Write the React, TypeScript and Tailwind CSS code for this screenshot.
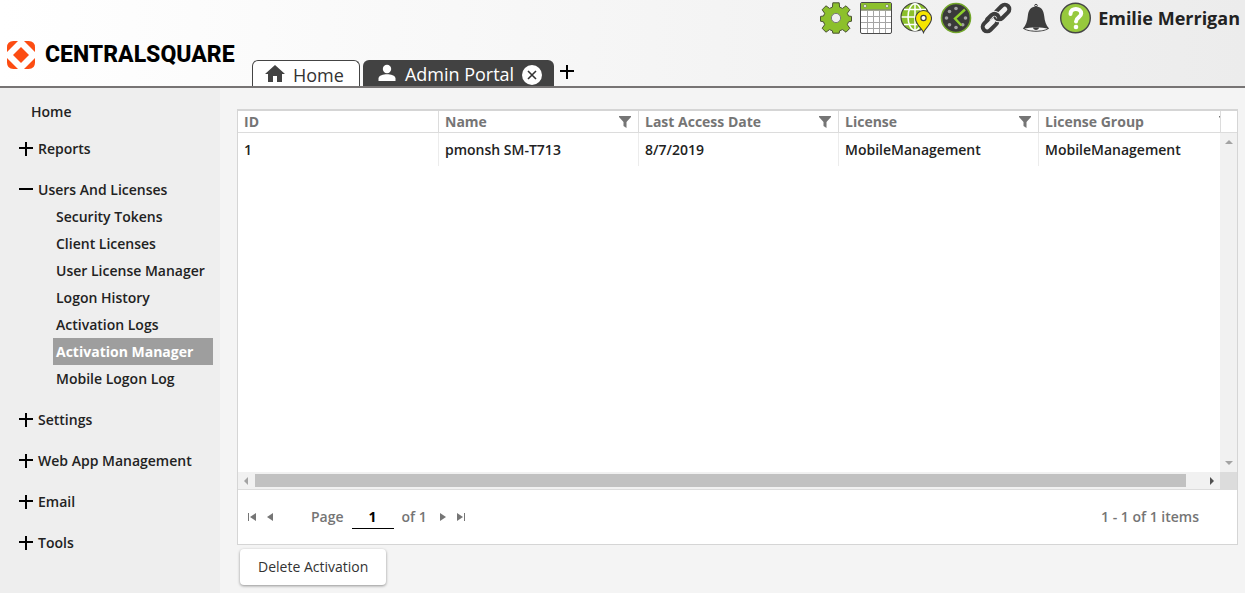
import React, { useState } from 'react';

interface MenuSection {
  label: string;
  items?: string[];
}

interface Activation {
  id: number;
  name: string;
  lastAccess: string;
  license: string;
  licenseGroup: string;
}

const sections: MenuSection[] = [
  { label: 'Reports' },
  {
    label: 'Users And Licenses',
    items: [
      'Security Tokens',
      'Client Licenses',
      'User License Manager',
      'Logon History',
      'Activation Logs',
      'Activation Manager',
      'Mobile Logon Log'
    ]
  },
  { label: 'Settings' },
  { label: 'Web App Management' },
  { label: 'Email' },
  { label: 'Tools' }
];

const activations: Activation[] = [
  { id: 1, name: 'pmonsh SM-T713', lastAccess: '8/7/2019', license: 'MobileManagement', licenseGroup: 'MobileManagement' }
];

const columns = ['ID', 'Name', 'Last Access Date', 'License', 'License Group'];

const GearIcon = () => (
  <svg className="size-8" viewBox="0 0 32 32" aria-hidden="true">
    <g fill="#8cc02c" stroke="#4a5233" strokeWidth="1">
      <path d="M12.8 0.8h6.4l.4 4.4 2.9 1.2 3.5-2.6 3.9 3.9-2.6 3.6 1.2 2.7 3 .4v4.8l-3 .6-1.2 2.9 2.6 3.6-3.9 3.9-3.5-2.6-2.9 1.2-.4 2.4h-6.4l-.4-2.4-2.9-1.2-3.5 2.6-3.9-3.9 2.6-3.6-1.2-2.9-3-.6v-4.8l3-.4 1.2-2.7-2.6-3.6 3.9-3.9 3.5 2.6 2.9-1.2z" />
      <circle cx="16" cy="16" r="4.6" fill="#efefef" stroke="#7a7a7a" />
    </g>
  </svg>
);

const CalendarIcon = () => (
  <svg className="size-8" viewBox="0 0 32 32" aria-hidden="true">
    <rect x="0.5" y="0.5" width="31" height="31" rx="1.5" fill="#fff" stroke="#4a4a4a" />
    <path d="M1 1h30v6.5H1z" fill="#8cc02c" />
    <path d="M1 8h30" stroke="#4a5233" />
    <path d="M7.5 9v22M13.5 9v22M19.5 9v22M25.5 9v22M1 14.5h30M1 20.5h30M1 26.5h30" stroke="#a5a5a5" />
    <circle cx="5" cy="4" r="1.5" fill="#fff" stroke="#4a5233" strokeWidth="0.5" />
    <circle cx="27" cy="4" r="1.5" fill="#fff" stroke="#4a5233" strokeWidth="0.5" />
  </svg>
);

const GlobeIcon = () => (
  <svg className="size-8" viewBox="0 0 32 32" aria-hidden="true">
    <circle cx="15" cy="15" r="14" fill="#8cc02c" stroke="#3f3f3f" strokeWidth="1.2" />
    <g fill="none" stroke="#fff" strokeWidth="1.5">
      <ellipse cx="15" cy="15" rx="7" ry="13.3" />
      <path d="M15 1.7v26.6M1.7 15h26.6M4 7.5h22M4 22.5h22" />
    </g>
    <path d="M23.5 30.5c-1.5-4.5-8-8-8-14a8 8 0 0 1 16 0c0 6-6.5 9.500-8 14z" fill="#f6e500" stroke="#3f3f3f" strokeWidth="1.1" />
    <circle cx="23.5" cy="16" r="2.6" fill="#fff" stroke="#3f3f3f" strokeWidth="1.2" />
  </svg>
);

const ClockIcon = () => (
  <svg className="size-8" viewBox="0 0 32 32" aria-hidden="true">
    <circle cx="16" cy="16" r="14.5" fill="#3a3a3a" stroke="#72a62a" strokeWidth="1.6" />
    <g fill="#a3a3a3">
      <circle cx="16" cy="6.5" r="1.8" />
      <circle cx="9.5" cy="9.5" r="1.8" />
      <circle cx="6.5" cy="16" r="1.8" />
      <circle cx="9.5" cy="22.7" r="1.8" />
      <circle cx="16" cy="25.5" r="1.8" />
      <circle cx="22.7" cy="22.7" r="1.8" />
      <circle cx="25.5" cy="16" r="1.8" />
    </g>
    <path d="M25 7.5L15 16.5L21.5 23.5" fill="none" stroke="#8fd02c" strokeWidth="2.4" />
  </svg>
);

const LinkIcon = () => (
  <svg className="size-8" viewBox="0 0 32 32" aria-hidden="true">
    <g fill="none" strokeLinecap="round">
      <rect x="-8.5" y="-4.5" width="17" height="9" rx="4.5" transform="translate(10 22) rotate(-45)" stroke="#3d3d3d" strokeWidth="4" />
      <rect x="-8.5" y="-4.5" width="17" height="9" rx="4.5" transform="translate(22 10) rotate(-45)" stroke="#efefef" strokeWidth="6" />
      <rect x="-8.5" y="-4.5" width="17" height="9" rx="4.5" transform="translate(22 10) rotate(-45)" stroke="#3d3d3d" strokeWidth="4" />
      <path d="M8 16.5l4-4q2.5-2 5 0l2 2.5" stroke="#efefef" strokeWidth="5.5" strokeLinecap="butt" />
      <path d="M7 17.5l4.5-4.5q3-2.5 6 0l1.5 2.5" stroke="#3d3d3d" strokeWidth="4" />
    </g>
  </svg>
);

const BellIcon = () => (
  <svg className="size-8" viewBox="0 0 32 32" aria-hidden="true">
    <circle cx="16" cy="3.6" r="1.3" fill="none" stroke="#3d3d3d" />
    <path d="M16 4.5c5.2 0 7.6 3.8 8.2 9.5.5 5.2 1.8 9.2 4.9 12.500-3 2.200-8 3.200-13.100 3.200S5.900 28.700 2.900 26.500C6 23.200 7.300 19.200 7.800 14 8.400 8.300 10.800 4.500 16 4.500z" fill="#3d3d3d" />
    <path d="M4.500 26.600c4-1.600 19-1.600 23 0-4 3-19 3-23 0z" fill="#f4f4f4" />
    <path d="M13 25.500h6c0 3.200-6 3.200-6 0z" fill="#3d3d3d" />
  </svg>
);

const HelpIcon = () => (
  <svg className="size-8" viewBox="0 0 32 32" aria-hidden="true">
    <circle cx="15.5" cy="16" r="14.8" fill="#97c93d" stroke="#454545" strokeWidth="1.4" />
    <path d="M10.5 12c0-7 10.700-6.500 10.700-.5 0 4-5.200 3.800-5.200 8" fill="none" stroke="#fff" strokeWidth="4" strokeLinecap="round" />
    <circle cx="16" cy="25" r="2.3" fill="#fff" />
  </svg>
);

const LogoMark = () => (
  <svg className="h-7 w-7" viewBox="0 0 28 28" fill="#fc4c12" aria-hidden="true">
    <path d="M14 6l8 8-8 8-8-8z" />
    <path d="M0 11V6.500Q0 0 6.500 0H11L0 11zM17 0h4.500Q28 0 28 6.500V11zM28 17v4.500q0 6.500-6.500 6.500H17zM11 28H6.500Q0 28 0 21.500V17z" />
  </svg>
);

const FilterIcon = () => (
  <svg className="h-3 w-3" viewBox="0 0 12 12" fill="#757575" aria-hidden="true">
    <path d="M0 0h12v1L7.5 6v6l-3-2V6L0 1z" />
  </svg>
);

const ToggleIcon = ({ open }: { open: boolean }) => (
  <svg className="h-3.5 w-3.5" viewBox="0 0 14 14" stroke="#000" strokeWidth="2" aria-hidden="true">
    <path d={open ? 'M0 6h14' : 'M0 6h14M7 0v14'} />
  </svg>
);

const Arrow = ({ d, color }: { d: string; color: string }) => (
  <svg className="h-2 w-2" viewBox="0 0 8 8" fill={color} aria-hidden="true">
    <path d={d} />
  </svg>
);

const shortcuts = [
  { label: 'Settings', Icon: GearIcon },
  { label: 'Calendar', Icon: CalendarIcon },
  { label: 'Map', Icon: GlobeIcon },
  { label: 'Time clock', Icon: ClockIcon },
  { label: 'Links', Icon: LinkIcon },
  { label: 'Notifications', Icon: BellIcon },
  { label: 'Help', Icon: HelpIcon }
];

const Header: React.FC = () => (
  <header className="flex h-22 border-b-2 border-[#777474] bg-gradient-to-r from-white to-[#ececec]">
    <a href="#" className="mb-[17px] ml-[7px] flex w-[245px] items-center gap-2.5 self-end">
      <LogoMark />
      <span className="font-[Roboto,sans-serif] text-[23px] leading-7 font-extrabold text-black">CENTRALSQUARE</span>
    </a>
    <nav className="flex items-end text-lg leading-7">
      <a href="#" className="mr-[3px] flex h-[26px] items-center gap-2 rounded-t-md border border-b-0 border-[#444] bg-white pr-[15px] pl-3 text-[#333]">
        <svg className="h-[18px] w-5" viewBox="0 0 20 18" fill="#424242" aria-hidden="true">
          <path d="M10 0l10 9h-3v8h-5v-6H8v6H3V9H0z" />
        </svg>
        <span className="pt-0.5">Home</span>
      </a>
      <div className="flex h-[26px] items-center gap-2 rounded-t-md bg-[#424242] px-3.5 pr-3 text-white">
        <a href="#" className="flex items-center gap-2">
          <svg className="h-[18px] w-5" viewBox="0 0 20 18" fill="#fff" aria-hidden="true">
            <circle cx="10" cy="5" r="4.2" />
            <path d="M1.5 17v-2.500c0-3 5-4.300 8.500-4.300s8.500 1.300 8.500 4.300V17z" />
          </svg>
          <span className="pt-0.5">Admin Portal</span>
        </a>
        <button type="button" aria-label="Close tab" className="pt-1">
          <svg className="h-5 w-5" viewBox="0 0 20 20" aria-hidden="true">
            <circle cx="10" cy="10" r="10" fill="#fff" />
            <path d="M6 6l8 8M14 6l-8 8" stroke="#333" strokeWidth="1.6" />
          </svg>
        </button>
      </div>
      <button type="button" aria-label="New tab" className="mb-[7px] ml-1.5">
        <ToggleIcon open={false} />
      </button>
    </nav>
    <div className="mt-0.5 mr-[5px] ml-auto flex items-center gap-1.5 self-start">
      <div className="flex gap-2">
        {shortcuts.map(({ label, Icon }) => (
          <button key={label} type="button" aria-label={label}>
            <Icon />
          </button>
        ))}
      </div>
      <span className="text-lg leading-8 font-bold text-[#222]">Emilie Merrigan</span>
    </div>
  </header>
);

const Sidebar: React.FC = () => {
  const [openSection, setOpenSection] = useState<string | null>('Users And Licenses');
  const [selected, setSelected] = useState('Activation Manager');

  return (
    <aside className="w-55 shrink-0 bg-[#eee] pt-2.5 text-sm leading-[27px] font-semibold text-[#222]">
      <a href="#" className="mb-2.5 ml-[31px] block">Home</a>
      {sections.map((section) => (
        <div key={section.label} className="mb-3.5">
          <button
            type="button"
            className="ml-[19px] flex items-center gap-[5px]"
            aria-expanded={openSection === section.label}
            onClick={() => setOpenSection(openSection === section.label ? null : section.label)}
          >
            <ToggleIcon open={openSection === section.label} />
            {section.label}
          </button>
          {openSection === section.label && section.items && (
            <ul className="mr-[7px] ml-[53px]">
              {section.items.map((item) => (
                <li key={item}>
                  <a
                    href="#"
                    onClick={() => setSelected(item)}
                    className={`block pl-[3px] whitespace-nowrap ${selected === item ? 'bg-[#9e9e9e] font-bold text-white' : ''}`}
                  >
                    {item}
                  </a>
                </li>
              ))}
            </ul>
          )}
        </div>
      ))}
    </aside>
  );
};

const ActivationGrid: React.FC = () => {
  const [page, setPage] = useState('1');

  return (
    <section className="flex flex-1 flex-col border border-t-2 border-[#d5d5d5] bg-white text-sm">
      <div className="flex flex-1">
        <div className="min-w-0 flex-1 overflow-hidden">
          <table className="w-[1001px] table-fixed border-separate border-spacing-0 text-left">
            <thead>
              <tr className="h-[22px]">
                {columns.map((column, i) => (
                  <th
                    key={column}
                    className={`border-r border-b border-[#dcdcdc] py-0 pr-[7px] pl-1.5 leading-[21px] font-bold text-[#757575] ${i === 0 ? 'w-[201px]' : 'w-[200px]'}`}
                  >
                    <span className="flex items-center justify-between">
                      {column}
                      {i > 0 && (
                        <button type="button" aria-label={`Filter ${column}`}>
                          <FilterIcon />
                        </button>
                      )}
                    </span>
                  </th>
                ))}
              </tr>
            </thead>
            <tbody>
              {activations.map((row) => (
                <tr key={row.id} className="h-[33px] font-semibold text-[#222]">
                  {[row.id, row.name, row.lastAccess, row.license, row.licenseGroup].map((value, i) => (
                    <td key={i} className="border-r border-[#ececec] px-1.5 py-0">{value}</td>
                  ))}
                </tr>
              ))}
            </tbody>
          </table>
        </div>
        <div className="flex w-[17px] flex-col">
          <div className="h-[22px] border-b border-l border-[#dcdcdc]" />
          <div className="flex flex-1 flex-col items-center justify-between bg-[#f1f1f1] py-[5px]">
            <Arrow d="M4 2l4 4H0z" color="#a3a3a3" />
            <Arrow d="M0 2h8L4 6z" color="#a3a3a3" />
          </div>
        </div>
      </div>
      <div className="flex h-[17px]">
        <div className="flex flex-1 items-center justify-between bg-[#f1f1f1] px-1">
          <Arrow d="M6 0v8L2 4z" color="#a3a3a3" />
          <div className="mr-[22px] ml-[5px] h-[13px] flex-1 bg-[#c1c1c1]" />
          <Arrow d="M2 0l4 4-4 4z" color="#505050" />
        </div>
        <div className="w-[17px] bg-[#dcdcdc]" />
      </div>
      <footer className="flex h-[55px] items-center border-t border-[#dcdcdc] pr-[38px] pl-2.5 font-semibold text-[#757575]">
        <button type="button" aria-label="First page" className="mr-2.5">
          <Arrow d="M0 0h1v8H0zM8 0v8L2 4z" color="#757575" />
        </button>
        <button type="button" aria-label="Previous page">
          <Arrow d="M7 0v8L1 4z" color="#757575" />
        </button>
        <label className="ml-[37px] flex items-center gap-2">
          Page
          <input
            type="text"
            value={page}
            onChange={(e) => setPage(e.target.value)}
            className="h-6 w-[42px] border-b border-black text-center font-bold text-black outline-none"
          />
        </label>
        <span className="mr-3 ml-2">of 1</span>
        <button type="button" aria-label="Next page" className="mr-2.5">
          <Arrow d="M1 0l6 4-6 4z" color="#757575" />
        </button>
        <button type="button" aria-label="Last page">
          <Arrow d="M0 0l6 4-6 4zM7 0h1v8H7z" color="#757575" />
        </button>
        <span className="ml-auto">1 - 1 of 1 items</span>
      </footer>
    </section>
  );
};

const App: React.FC = () => {
  return (
    <div className="flex min-h-screen flex-col bg-[#f4f4f4] font-['Open_Sans',sans-serif]">
      <Header />
      <div className="flex flex-1">
        <Sidebar />
        <main className="flex min-w-0 flex-1 flex-col pt-[21px] pr-[7px] pb-2 pl-[17px]">
          <ActivationGrid />
          <button
            type="button"
            className="mt-1 ml-[3px] h-9 self-start rounded bg-white px-[18px] text-sm font-medium text-[#333] shadow-[0_1px_3px_rgba(0,0,0,0.4)]"
          >
            Delete Activation
          </button>
        </main>
      </div>
    </div>
  );
};

export default App;
